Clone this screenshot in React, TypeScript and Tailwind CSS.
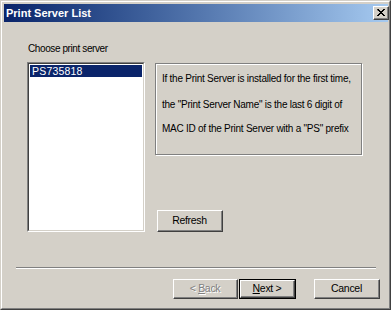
import React from "react";

const F = { fontFamily: '"Liberation Sans", Arial, sans-serif' };

function Btn({ children, className = "", def = false, disabled = false }: { children: React.ReactNode; className?: string; def?: boolean; disabled?: boolean }) {
  const inner = (
    <div className="h-full w-full border-t border-l border-t-white border-l-white border-r border-b border-r-[#404040] border-b-[#404040]">
      <div className={`h-full w-full border-r border-b border-r-[#808080] border-b-[#808080] flex items-center justify-center text-[10.5px] tracking-[-0.3px] ${disabled ? "text-[#808080] [text-shadow:1px_1px_0_#ffffff]" : "text-black"}`}>
        {children}
      </div>
    </div>
  );
  return (
    <div className={`${className} shrink-0 ${def ? "border border-black" : ""} bg-[#d4d0c8]`}>{inner}</div>
  );
}

export default function App() {
  return (
    <div style={F} className="w-[391px] h-[310px] bg-[#d4d0c8] border-t border-l border-t-[#d4d0c8] border-l-[#d4d0c8] border-r border-b border-r-[#404040] border-b-[#404040]">
      <div className="h-full w-full border-t border-l border-t-white border-l-white border-r border-b border-r-[#808080] border-b-[#808080] p-px flex flex-col">
        {/* Title bar */}
        <div className="h-[18px] ml-px mt-px flex items-center justify-between bg-gradient-to-r from-[#0a246a] to-[#a6caf0] pl-[2px] pr-0">
          <span className="text-white font-bold text-[11px] tracking-[0px] leading-none">Print Server List</span>
          <div className="w-[16px] h-[14px] mr-[-1px] bg-[#d4d0c8] border-t border-l border-t-white border-l-white border-r border-b border-r-[#404040] border-b-[#404040]">
            <div className="w-full h-full border-r border-b border-r-[#808080] border-b-[#808080] flex items-center justify-center">
              <svg width="8" height="7" viewBox="0 0 8 7">
                <path d="M0 0h2v1h1v1h2v-1h1v-1h2v1h-1v1h-1v1h-1v1h1v1h1v1h1v1h-2v-1h-1v-1h-2v1h-1v1h-2v-1h1v-1h1v-1h1v-1h-1v-1h-1z" fill="#000" />
              </svg>
            </div>
          </div>
        </div>

        {/* Body */}
        <div className="flex flex-col pl-[24px] pr-[27px]">
          <div className="flex">
            <div className="flex flex-col w-[118px] shrink-0">
              <div className="text-[10px] tracking-[-0.4px] leading-[12px] mt-[21px] pl-px text-black">Choose print server</div>
              <div className="mt-[7px] h-[170px] border-t border-l border-t-[#808080] border-l-[#808080] border-r border-b border-r-white border-b-white">
                <div className="h-full w-full border-t border-l border-t-[#404040] border-l-[#404040] border-r border-b border-r-[#d4d0c8] border-b-[#d4d0c8] bg-white p-px">
                  <div className="h-[12px] bg-[#0a246a] text-white text-[10.5px] tracking-[0.2px] leading-[12px] pl-[2px]">PS735818</div>
                </div>
              </div>
            </div>
            <div className="flex flex-col ml-[10px] w-[207px] shrink-0">
              <div className="mt-[41px] h-[92px] border border-[#808080] shadow-[1px_1px_0_#ffffff,inset_1px_1px_0_#ffffff] flex flex-col pl-[6px] text-[10px] tracking-[-0.25px] text-black">
                <div className="mt-[9px] leading-[12px] whitespace-nowrap">If the Print Server is installed for the first time,</div>
                <div className="mt-[14px] leading-[12px] whitespace-nowrap">the "Print Server Name" is the last 6 digit of</div>
                <div className="mt-[12px] leading-[12px] whitespace-nowrap">MAC ID of the Print Server with a "PS" prefix</div>
              </div>
              <Btn className="mt-[55px] ml-[2px] w-[66px] h-[22px]">Refresh</Btn>
            </div>
          </div>
          <div className="mt-[35px] -ml-[11px] mr-[-15px] h-[2px] border-t border-t-[#808080] border-b border-b-white" />
          <div className="flex mt-[10px]">
            <Btn disabled className="ml-[146px] w-[65px] h-[20px]"><span>&lt; <u>B</u>ack</span></Btn>
            <Btn def className="ml-[1px] w-[57px] h-[20px]"><span><u>N</u>ext &gt;</span></Btn>
            <Btn className="ml-[18px] w-[66px] h-[20px]">Cancel</Btn>
          </div>
        </div>
      </div>
    </div>
  );
}
